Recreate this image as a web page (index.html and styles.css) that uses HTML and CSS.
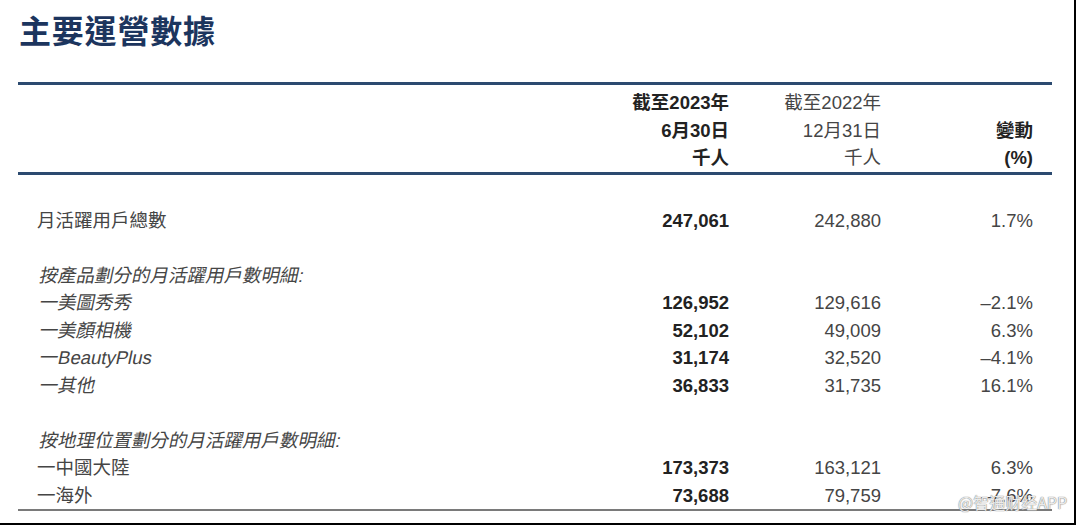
FILE: index.html
```html
<!DOCTYPE html>
<html lang="zh-Hant">
<head>
<meta charset="utf-8">
<title>主要運營數據</title>
<link rel="stylesheet" href="styles.css">
</head>
<body>
<div class="page">
  <h1 class="title">主要運營數據</h1>
  <div class="table">
    <div class="head">
      <div class="cell label"></div>
      <div class="cell num bold">截至2023年<br>6月30日<br>千人</div>
      <div class="cell num">截至2022年<br>12月31日<br>千人</div>
      <div class="cell num bold"><br>變動<br>(%)</div>
    </div>
    <div class="body">
      <div class="row">
        <div class="cell label">月活躍用戶總數</div>
        <div class="cell num bold">247,061</div>
        <div class="cell num">242,880</div>
        <div class="cell num">1.7%</div>
      </div>
      <div class="row spacer"></div>
      <div class="row">
        <div class="cell label"><span class="slant">按產品劃分的月活躍用戶數明細:</span></div>
        <div class="cell num"></div><div class="cell num"></div><div class="cell num"></div>
      </div>
      <div class="row">
        <div class="cell label"><span class="slant">一美圖秀秀</span></div>
        <div class="cell num bold">126,952</div>
        <div class="cell num">129,616</div>
        <div class="cell num">–2.1%</div>
      </div>
      <div class="row">
        <div class="cell label"><span class="slant">一美顏相機</span></div>
        <div class="cell num bold">52,102</div>
        <div class="cell num">49,009</div>
        <div class="cell num">6.3%</div>
      </div>
      <div class="row">
        <div class="cell label"><span class="slant">一BeautyPlus</span></div>
        <div class="cell num bold">31,174</div>
        <div class="cell num">32,520</div>
        <div class="cell num">–4.1%</div>
      </div>
      <div class="row">
        <div class="cell label"><span class="slant">一其他</span></div>
        <div class="cell num bold">36,833</div>
        <div class="cell num">31,735</div>
        <div class="cell num">16.1%</div>
      </div>
      <div class="row spacer"></div>
      <div class="row">
        <div class="cell label"><span class="slant">按地理位置劃分的月活躍用戶數明細:</span></div>
        <div class="cell num"></div><div class="cell num"></div><div class="cell num"></div>
      </div>
      <div class="row">
        <div class="cell label">一中國大陸</div>
        <div class="cell num bold">173,373</div>
        <div class="cell num">163,121</div>
        <div class="cell num">6.3%</div>
      </div>
      <div class="row">
        <div class="cell label">一海外</div>
        <div class="cell num bold">73,688</div>
        <div class="cell num">79,759</div>
        <div class="cell num">–7.6%</div>
      </div>
    </div>
  </div>
  <div class="watermark">@智通财经APP</div>
</div>
</body>
</html>
```

FILE: styles.css
```css
html, body {
  margin: 0;
  padding: 0;
  background: #fff;
}
.page {
  position: relative;
  width: 1076px;
  height: 525px;
  box-sizing: border-box;
  border-right: 2px solid #000;
  border-bottom: 2px solid #000;
  overflow: hidden;
  font-family: "Liberation Sans", "Noto Sans CJK TC", Arial, sans-serif;
  color: #454545;
}
.title {
  margin: 0;
  padding: 6px 0 0 19px;
  height: 76px;
  box-sizing: border-box;
  font-family: "Noto Sans CJK TC", "Liberation Sans", sans-serif;
  font-size: 32px;
  line-height: 46px;
  font-weight: 700;
  color: #1c355e;
  letter-spacing: 0.8px;
}
.table {
  margin: 6px 22px 0 18px;
  border-top: 3px solid #2c4a70;
}
.head, .row {
  display: grid;
  grid-template-columns: 1fr 152px 152px 152px;
  padding: 0 19px;
}
.head {
  padding-top: 4px;
  padding-bottom: 0;
  border-bottom: 3px solid #2c4a70;
}
.body {
  padding-top: 32px;
  border-bottom: 2px solid #7a7a7a;
}
.cell {
  font-size: 18.5px;
  line-height: 27.5px;
  white-space: nowrap;
}
.row.spacer {
  height: 27.5px;
}
.num {
  text-align: right;
}
.bold {
  font-weight: 700;
  color: #222;
}
.slant {
  display: inline-block;
  transform: skewX(-12deg);
  transform-origin: 0 100%;
}
.watermark {
  position: absolute;
  left: 958px;
  top: 490px;
  white-space: nowrap;
  font-family: "Noto Sans CJK SC", "Liberation Sans", sans-serif;
  font-size: 16px;
  line-height: 24px;
  color: rgba(255, 255, 255, 0.85);
  text-shadow: 0 0 1px #777, 0 0 1px #999;
}
```
